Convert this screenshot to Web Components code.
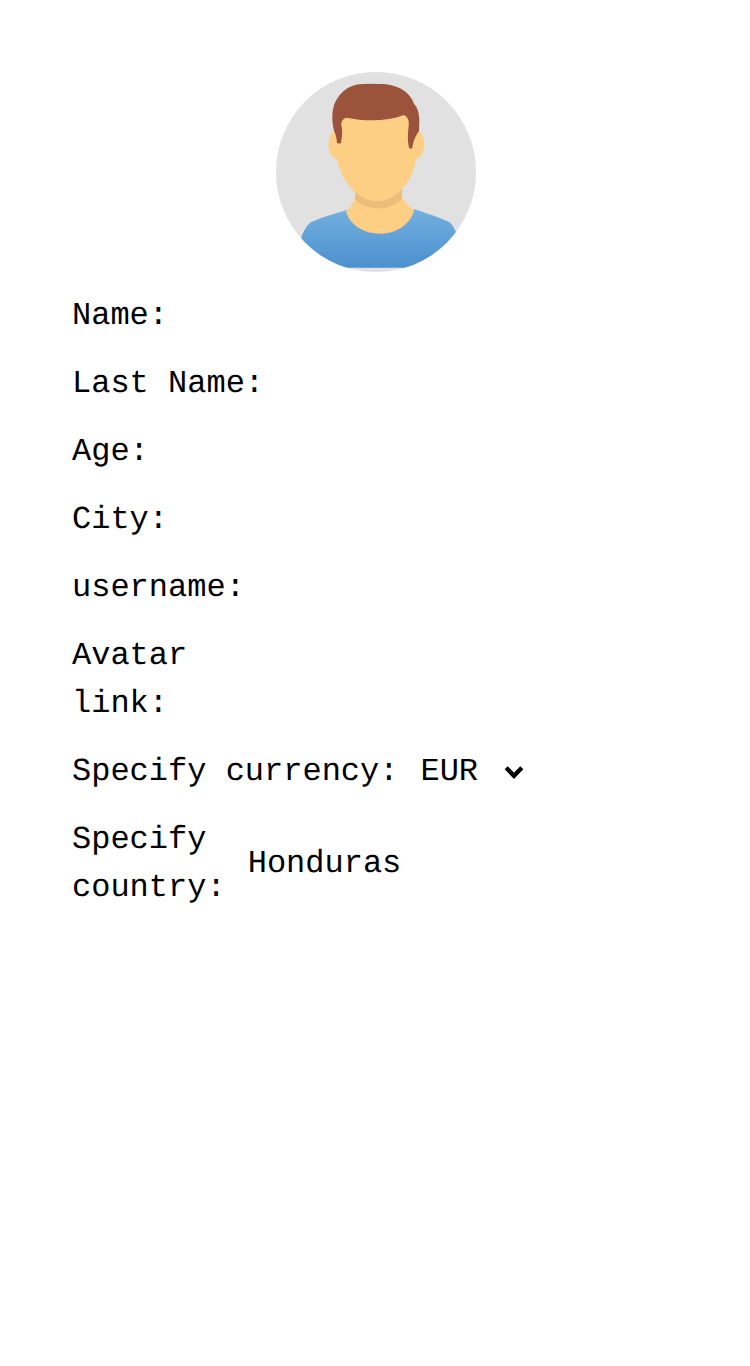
<!DOCTYPE html>
<html lang="en">
<head>
<meta charset="utf-8">
<title>Profile</title>
<style>
body { margin: 0; background: #fff; }
</style>
</head>
<body>
<profile-card>
  <user-avatar></user-avatar>
  <profile-row>Name:</profile-row>
  <profile-row>Last Name:</profile-row>
  <profile-row>Age:</profile-row>
  <profile-row>City:</profile-row>
  <profile-row>username:</profile-row>
  <profile-row narrow>Avatar link:</profile-row>
  <profile-row>Specify currency:<currency-select slot="value">EUR</currency-select></profile-row>
  <profile-row narrow>Specify country:<span slot="value">Honduras</span></profile-row>
</profile-card>
<script>
const define = (name, html) => customElements.define(name, class extends HTMLElement {
  constructor() {
    super();
    this.attachShadow({ mode: 'open' }).innerHTML = html;
  }
});

define('profile-card', `
<style>
:host { display: flex; flex-direction: column; gap: 20px; box-sizing: border-box; min-height: 1366px; padding: 72px;
  color: #000; font: 32px/48px "Liberation Mono", monospace; text-rendering: geometricPrecision; }
</style>
<slot></slot>`);

define('profile-row', `
<style>
:host { display: flex; align-items: center; gap: 22px; min-height: 48px; }
.label { flex: none; white-space: nowrap; }
:host([narrow]) .label { width: 153.7px; white-space: normal; }
</style>
<div class="label"><slot></slot></div><slot name="value"></slot>`);

define('currency-select', `
<style>
:host { display: flex; align-items: center; gap: 26px; }
svg { display: block; width: 20px; height: 14px; }
</style>
<slot></slot>
<svg viewBox="0 0 20 14"><path d="M2.2 2.8 L10 10.8 L17.8 2.8" fill="none" stroke="#000" stroke-width="4.3"/></svg>`);

define('user-avatar', `
<style>
:host { display: block; align-self: center; width: 200px; height: 200px; margin-left: 2px; border-radius: 50%; overflow: hidden; background: #e1e1e1; }
svg { display: block; width: 200px; height: 200px; }
</style>
<svg viewBox="18 18 600 600">
  <defs>
    <linearGradient id="shirt" x1="0" y1="430" x2="0" y2="605" gradientUnits="userSpaceOnUse">
      <stop offset="0" stop-color="#74afdf"/><stop offset="1" stop-color="#4b91ce"/>
    </linearGradient>
  </defs>
  <path fill="url(#shirt)" d="M230 433 C190 444 155 455 124 468 C112 475 102 494 94 513 L80 605 H570 L557 496 C551 484 546 474 538 468 C505 454 470 442 432 429 Z"/>
  <path fill="#fccf84" d="M256 365 V386 C254 405 244 423 228 436 C239 476 278 503 330 503 C382 503 422 473 433 431 C416 421 403 408 396 389 V365 Z"/>
  <path fill="#ebbd78" d="M256 365 V401 C291 436 355 438 396 398 V365 Z"/>
  <ellipse cx="202" cy="236" rx="27" ry="43" fill="#fccf84"/>
  <ellipse cx="436" cy="236" rx="27" ry="43" fill="#fccf84"/>
  <path fill="#fccf84" d="M198 130 H440 V270 C433 337 384 406 321 406 C262 406 211 341 201 276 Z"/>
  <path fill="#9b543b" d="M193 197 C184 165 184 124 201 99 C219 69 246 55 280 54 Q305 53 332 54 C376 54 418 73 432 113 C444 125 448 146 448 168 L447 195 C437 210 430 222 427 246 Q422 251 417 245 C412 225 413 204 416 180 C418 165 415 154 402 147 C348 168 284 166 229 155 C218 158 213 167 214 178 C218 194 217 208 213 230 Q207 235 201 230 C200 218 198 205 193 197 Z"/>
</svg>`);
</script>
</body>
</html>
